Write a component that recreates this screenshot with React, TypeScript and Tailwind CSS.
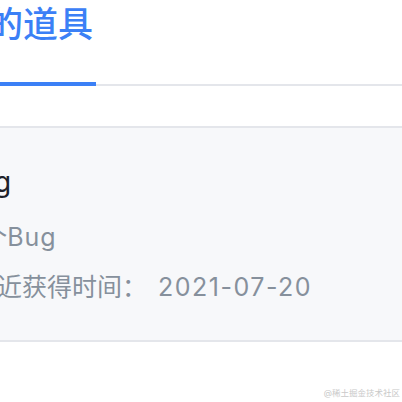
import React from 'react';

const sans = 'font-["Inter","Noto_Sans_CJK_SC",sans-serif]';

export default function App() {
  return (
    <div className={`relative h-[402px] w-[402px] overflow-hidden bg-white ${sans}`}>
      {/* tab header */}
      <div className="border-b-2 border-[#e4e6eb]">
        <div className="ml-[-47px] flex w-[143px] flex-col">
          <span className="mt-[7px] whitespace-nowrap text-[35px] font-medium leading-[35px] text-[#3b80f6]">我的道具</span>
          <div className="relative top-[2px] mt-[38px] h-[4px] w-full bg-[#3b80f6]" />
        </div>
      </div>

      {/* item card */}
      <div className="mt-[40px] border-y-2 border-[#e4e6eb] bg-[#f7f8fa]">
        <div className="ml-[-28px] flex flex-col pt-[40px] pb-[40px] whitespace-nowrap">
          <div className="ml-[-13px] text-[28px] leading-[28px] text-[#1d2129]">Bug</div>
          <div className="mt-[29px] text-[25px] leading-[25px] text-[#86909c]">
            1个<span className="tracking-[1px]">Bug</span>
          </div>
          <div className="mt-[25px] flex text-[25px] leading-[25px] text-[#86909c]">
            <span>最近获得时间：</span>
            <span className="ml-[11px] tracking-[1.5px]">2021-07-20</span>
          </div>
        </div>
      </div>

      <span className="absolute bottom-[4px] right-[2px] text-[8.5px] leading-[10px] text-[#c9c9c9]">@稀土掘金技术社区</span>
    </div>
  );
}
